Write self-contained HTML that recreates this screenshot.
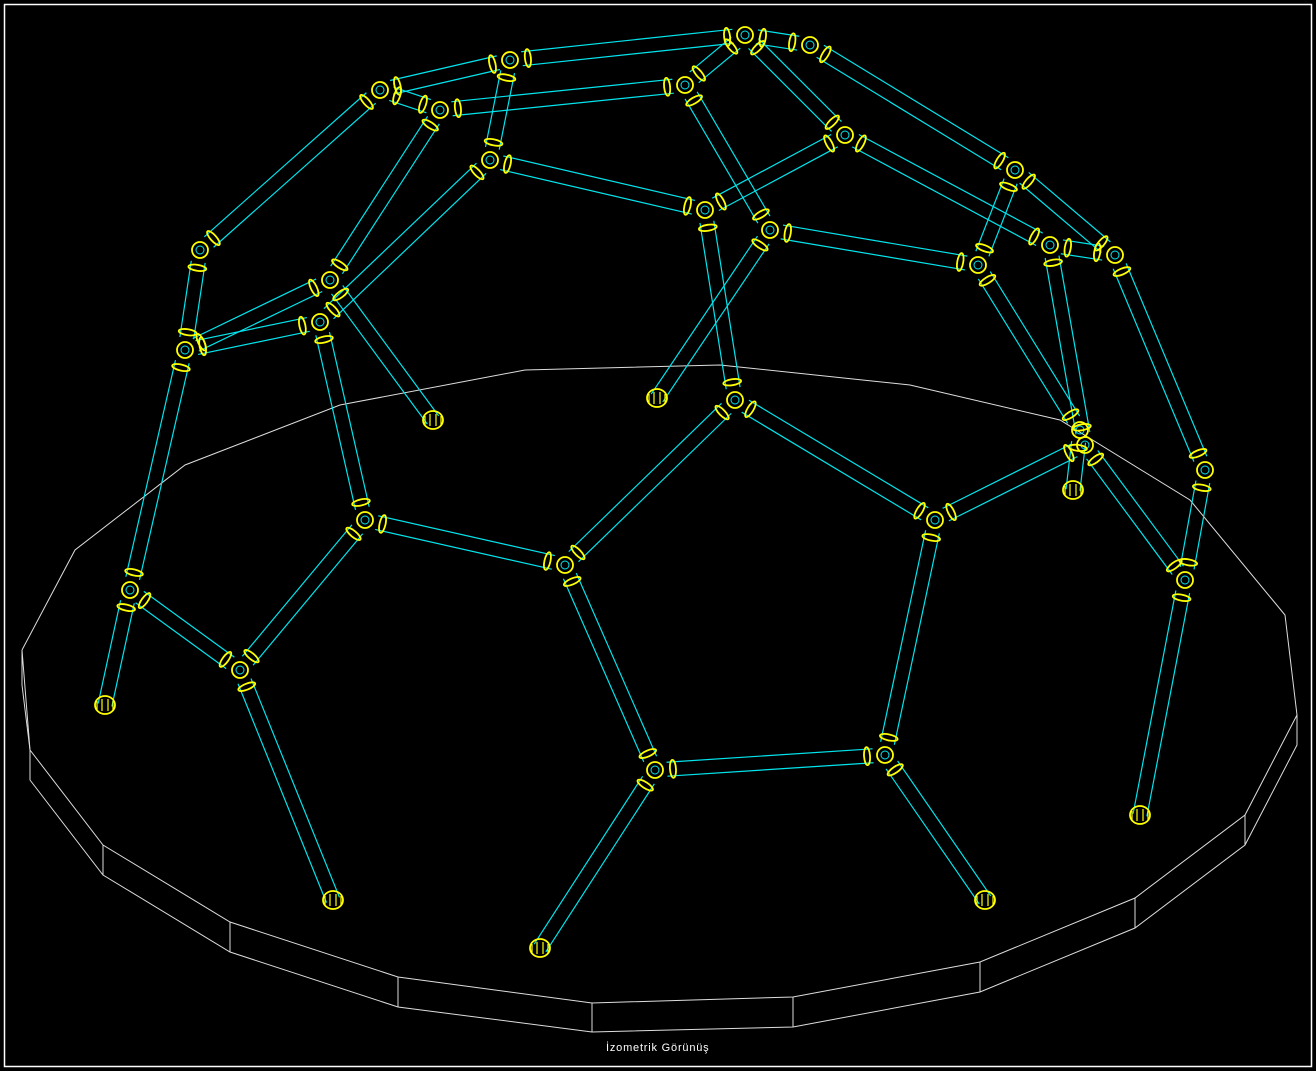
<!DOCTYPE html>
<html><head><meta charset="utf-8"><style>
html,body{margin:0;padding:0;background:#000;width:1316px;height:1071px;overflow:hidden}
svg{display:block}
</style></head><body>
<svg id="s" width="1316" height="1071" xmlns="http://www.w3.org/2000/svg">
<rect x="4.5" y="4.5" width="1307" height="1062" fill="none" stroke="#fff" stroke-width="1.5"/>
<g fill="none" stroke="#ddd" stroke-width="1">
<polyline points="22,650 75,550 185,465 340,405 525,370 720,365 910,385 1060,420 1190,500 1285,615 1297,715 1245,815 1135,898 980,962 793,997 592,1003 398,977 230,922 103,845 30,750 22,650"/>
<polyline points="22,650 22,685 30,750 30,780 103,875 230,952 398,1007 592,1032 793,1027 980,992 1135,928 1245,845 1297,745 1297,715"/>
<path d="M30,750V780M103,845V875M230,922V952M398,977V1007M592,1003V1032M793,997V1027M980,962V992M1135,898V928M1245,815V845"/>
</g>
<text x="606" y="1051" fill="#fff" font-family="Liberation Sans, sans-serif" font-size="11" letter-spacing="0.8">İzometrik Görünüş</text>
<g id="pipes" stroke="#00e5ee" stroke-width="1.2" fill="none"></g>
<g id="joints" stroke="#ffff00" stroke-width="1.8" fill="none"></g>
</svg>
<script>
var N={A:[735,400],B:[565,565],C:[365,520],D:[935,520],E:[655,770],F:[885,755],G:[240,670],H:[130,590],I:[1185,580],J:[1085,445],
K:[185,350],L:[200,250],M:[320,322],N:[330,280],O:[490,160],P:[440,110],Q:[380,90],R:[510,60],S:[745,35],T:[810,45],U:[685,85],V:[705,210],W:[770,230],X:[845,135],Y:[978,265],Z:[1050,245],AA:[1015,170],AB:[1115,255],AC:[1205,470],AD:[1080,430],
f1:[105,705],f2:[333,900],f3:[540,948],f4:[985,900],f5:[1140,815],f6:[433,420],f7:[657,398],f8:[1073,490]};
var E=[["A","B"],["A","D"],["A","V"],["B","C"],["B","E"],["C","G"],["C","M"],["D","F"],["D","J"],["E","F"],["E","f3"],["F","f4"],["G","H"],["G","f2"],["H","K"],["H","f1"],
["K","L"],["K","M"],["K","N"],["L","Q"],["N","P"],["N","f6"],["M","O"],["O","R"],["O","V"],["P","Q"],["Q","R"],["P","U"],["R","S"],["S","U"],["S","T"],["T","AA"],["S","X"],["U","W"],["W","f7"],["W","Y"],["X","V"],["X","Z"],["AA","Y"],["AA","AB"],["Z","AB"],["Y","AD"],["AD","f8"],["Z","J"],["J","I"],["AB","AC"],["AC","I"],["I","f5"]];
var ns="http://www.w3.org/2000/svg",pg=document.getElementById("pipes"),jg=document.getElementById("joints");
function el(t,a,p){var e=document.createElementNS(ns,t);for(var k in a)e.setAttribute(k,a[k]);p.appendChild(e);return e;}
E.forEach(function(e){var a=N[e[0]],b=N[e[1]],dx=b[0]-a[0],dy=b[1]-a[1],L=Math.hypot(dx,dy),ux=dx/L,uy=dy/L,px=-uy*7,py=ux*7,s=12,t=L-12;
if(e[1][0]=="f")t=L;
var x1=a[0]+ux*s,y1=a[1]+uy*s,x2=a[0]+ux*t,y2=a[1]+uy*t;
el("line",{x1:x1+px,y1:y1+py,x2:x2+px,y2:y2+py},pg);el("line",{x1:x1-px,y1:y1-py,x2:x2-px,y2:y2-py},pg);
var ang=Math.atan2(dy,dx)*180/Math.PI;
[s+6,t-6].forEach(function(d,i){if(i==1&&e[1][0]=="f")return;var cx=a[0]+ux*d,cy=a[1]+uy*d;
el("ellipse",{cx:cx,cy:cy,rx:3,ry:9,transform:"rotate("+ang+" "+cx+" "+cy+")"},jg);});
});
for(var k in N){var p=N[k];if(k[0]=="f"){el("ellipse",{cx:p[0],cy:p[1],rx:10,ry:9},jg);el("path",{d:"M"+(p[0]-8)+","+(p[1]-4)+"v10M"+(p[0]-3)+","+(p[1]-6)+"v12M"+(p[0]+3)+","+(p[1]-6)+"v12M"+(p[0]+8)+","+(p[1]-4)+"v10",'stroke-width':1.2},jg);}
else{el("circle",{cx:p[0],cy:p[1],r:8},jg);el("circle",{cx:p[0],cy:p[1],r:4,stroke:"#00e5ee","stroke-width":1},pg);}}
</script>
</body></html>
